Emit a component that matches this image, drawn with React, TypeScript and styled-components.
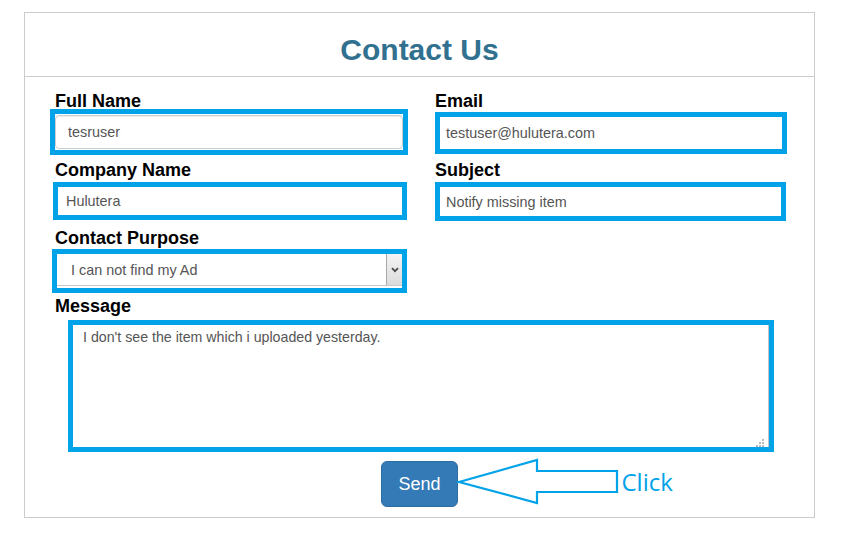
import React from "react";
import styled, { createGlobalStyle } from "styled-components";

const Global = createGlobalStyle`
  html, body { margin: 0; padding: 0; background: #fff; }
  body { font-family: "Liberation Sans", Arial, sans-serif; }
  * { box-sizing: border-box; }
`;

const MARK = "#00a2e8";

const Card = styled.div`
  margin: 12px 0 0 24px;
  width: 791px;
  border: 1px solid #cccccc;
  background: #fff;
`;

const Header = styled.div`
  padding: 20px 0 10px;
  border-bottom: 1px solid #cccccc;
  text-align: center;
`;

const Title = styled.h1`
  margin: 0;
  font-size: 30px;
  line-height: 33px;
  font-weight: bold;
  color: #31708f;
`;

const Body = styled.form`
  padding: 13px 30px 10px 30px;
  display: flex;
  flex-direction: column;
`;

const Row = styled.div<{ $h: number }>`
  display: grid;
  grid-template-columns: 380px 1fr;
  align-items: start;
  height: ${(p) => p.$h}px;
`;

const Field = styled.div`
  display: flex;
  flex-direction: column;
  align-items: flex-start;
`;

const Label = styled.label`
  font-size: 18px;
  line-height: 20px;
  padding-top: 1px;
  margin-bottom: -1px;
  font-weight: bold;
  color: #000;
`;

const Highlight = styled.div<{ $w: number; $h: number; $dx: number; $dy: number; $pad?: string }>`
  position: relative;
  width: ${(p) => p.$w}px;
  height: ${(p) => p.$h}px;
  margin-left: ${(p) => p.$dx}px;
  margin-top: ${(p) => p.$dy}px;
  padding: ${(p) => p.$pad ?? "0"};
  border: 5px solid ${MARK};
  background: #fff;
`;

const TextInput = styled.input<{ $bordered?: boolean; $px: number }>`
  display: block;
  width: 100%;
  height: 100%;
  margin: 0;
  padding: 0 ${(p) => p.$px}px;
  font-family: "Liberation Sans", Arial, sans-serif;
  font-size: 14.4px;
  color: #555;
  background: #fff;
  outline: none;
  border: ${(p) => (p.$bordered ? "1px solid #cccccc" : "none")};
  border-radius: ${(p) => (p.$bordered ? "4px" : "0")};
  box-shadow: ${(p) => (p.$bordered ? "inset 0 1px 1px rgba(0,0,0,.075)" : "none")};
`;

const SelectBox = styled.div`
  position: relative;
  width: 100%;
  height: 32px;
`;

const Select = styled.select`
  appearance: none;
  -webkit-appearance: none;
  display: block;
  width: 100%;
  height: 32px;
  margin: 0;
  padding: 0 0 0 14px;
  border: none;
  border-bottom: 1px solid #c8c8c8;
  border-radius: 0;
  background: #fff;
  font-family: "Liberation Sans", Arial, sans-serif;
  font-size: 14.4px;
  color: #555;
  outline: none;
`;

const ArrowBox = styled.span`
  position: absolute;
  right: 0;
  top: 0;
  width: 16px;
  height: 31px;
  border-left: 1px solid #a9a9a9;
  background: linear-gradient(#f3f3f3, #dcdcdc);
  display: flex;
  align-items: center;
  justify-content: center;
  pointer-events: none;
`;

const TextArea = styled.textarea`
  display: block;
  width: 100%;
  height: 100%;
  margin: 0;
  padding: 2px 10px;
  border: none;
  border-right: 1px solid #c6c6c6;
  resize: none;
  outline: none;
  font-family: "Liberation Sans", Arial, sans-serif;
  font-size: 14.2px;
  line-height: 20px;
  color: #555;
  background: #fff;
`;

const Grip = styled.svg`
  position: absolute;
  right: 4px;
  bottom: 0;
  pointer-events: none;
`;

const ButtonRow = styled.div`
  display: flex;
  justify-content: center;
  margin-top: 9px;
`;

const ButtonWrap = styled.div`
  position: relative;
`;

const SendButton = styled.button`
  display: block;
  padding: 10px 16px;
  font-family: "Liberation Sans", Arial, sans-serif;
  font-size: 18px;
  line-height: 24px;
  color: #fff;
  background: #337ab7;
  border: 1px solid #2e6da4;
  border-radius: 6px;
  cursor: pointer;
`;

const Arrow = styled.svg`
  position: absolute;
  left: calc(100% - 1px);
  top: -3px;
  overflow: visible;
`;

const ClickNote = styled.span`
  position: absolute;
  left: 240px;
  top: 9px;
  font-family: "Open Sans", "Noto Sans", sans-serif;
  font-size: 24px;
  line-height: 24px;
  color: ${MARK};
  white-space: nowrap;
`;

export default function App() {
  return (
    <>
      <Global />
      <Card>
        <Header>
          <Title>Contact Us</Title>
        </Header>
        <Body onSubmit={(e) => e.preventDefault()}>
          <Row $h={69}>
            <Field>
              <Label>Full Name</Label>
              <Highlight $w={358} $h={46} $dx={-5} $dy={-1} $pad="1px 0">
                <TextInput $bordered $px={12} defaultValue="tesruser" />
              </Highlight>
            </Field>
            <Field>
              <Label>Email</Label>
              <Highlight $w={352} $h={42} $dx={0} $dy={2}>
                <TextInput $px={6} defaultValue="testuser@hulutera.com" />
              </Highlight>
            </Field>
          </Row>
          <Row $h={68}>
            <Field>
              <Label>Company Name</Label>
              <Highlight $w={354} $h={38} $dx={-2} $dy={3}>
                <TextInput $px={8} defaultValue="Hulutera" />
              </Highlight>
            </Field>
            <Field>
              <Label>Subject</Label>
              <Highlight $w={351} $h={39} $dx={0} $dy={3}>
                <TextInput $px={6} defaultValue="Notify missing item" />
              </Highlight>
            </Field>
          </Row>
          <Row $h={68}>
            <Field>
              <Label>Contact Purpose</Label>
              <Highlight $w={355} $h={44} $dx={-3} $dy={2}>
                <SelectBox>
                  <Select defaultValue="ad">
                    <option value="ad">I can not find my Ad</option>
                    <option value="other">Other</option>
                  </Select>
                  <ArrowBox>
                    <svg width="8" height="6" viewBox="0 0 8 6">
                      <path d="M1 1.2 L4 4.2 L7 1.2" fill="none" stroke="#4a4a4a" strokeWidth="1.8" />
                    </svg>
                  </ArrowBox>
                </SelectBox>
              </Highlight>
            </Field>
          </Row>
          <Field>
            <Label>Message</Label>
            <Highlight $w={706} $h={132} $dx={13} $dy={5}>
              <TextArea defaultValue="I don't see the item which i uploaded yesterday." />
              <Grip width="9" height="8" viewBox="0 0 9 8">
                <rect x="6" y="0" width="2" height="2" fill="#bcbcbc" />
                <rect x="3" y="3" width="2" height="2" fill="#bcbcbc" />
                <rect x="6" y="3" width="2" height="2" fill="#bcbcbc" />
                <rect x="0" y="6" width="2" height="2" fill="#bcbcbc" />
                <rect x="3" y="6" width="2" height="2" fill="#bcbcbc" />
                <rect x="6" y="6" width="2" height="2" fill="#bcbcbc" />
              </Grip>
            </Highlight>
          </Field>
          <ButtonRow>
            <ButtonWrap>
              <SendButton type="submit">Send</SendButton>
              <Arrow width="164" height="48" viewBox="0 0 164 48">
                <polygon
                  points="2,24 80,2 80,13 160,13 160,34 80,34 80,45"
                  fill="none"
                  stroke={MARK}
                  strokeWidth="2.2"
                  strokeLinejoin="miter"
                />
              </Arrow>
              <ClickNote>Click</ClickNote>
            </ButtonWrap>
          </ButtonRow>
        </Body>
      </Card>
    </>
  );
}
